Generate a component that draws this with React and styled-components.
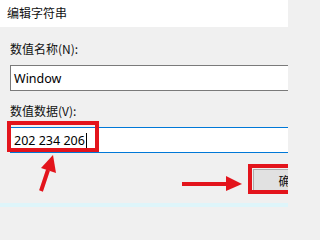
import React from "react";
import styled, { createGlobalStyle } from "styled-components";

const Global = createGlobalStyle`
  html, body { margin: 0; padding: 0; background: #f0f0f0; }
  body { width: 288px; height: 207px; overflow: hidden; }
`;

const Viewport = styled.div`
  position: relative;
  width: 288px;
  height: 207px;
  overflow: hidden;
  font-family: "Noto Sans", "Noto Sans CJK SC", sans-serif;
  color: #000;
`;

const Dialog = styled.div`
  width: 338px;
  display: flex;
  flex-direction: column;
  background: #f0f0f0;
  height: 203px;
`;

const TitleBar = styled.div`
  height: 27px;
  flex: none;
  background: #fff;
  padding-left: 7px;
  font-family: "Noto Sans CJK SC", sans-serif;
  font-size: 12px;
  line-height: 26px;
  color: #111;
`;

const Body = styled.div`
  display: flex;
  flex-direction: column;
  padding: 14px 10px 0 10px;
`;

const Label = styled.div`
  font-family: "Noto Sans CJK SC", sans-serif;
  font-size: 12px;
  line-height: 16px;
  height: 16px;
  margin-top: ${(p) => p.$top || 0}px;
  margin-bottom: 8px;
  color: #111;
`;

const TextBox = styled.div`
  box-sizing: border-box;
  height: 26px;
  border: 1px solid ${(p) => (p.$focused ? "#0078d7" : "#7a7a7a")};
  background: #fff;
  padding-left: 3px;
  display: flex;
  align-items: center;
  font-family: "Noto Sans", sans-serif;
  font-size: 12.5px;
  color: #000;
`;

const Caret = styled.span`
  display: inline-block;
  width: 1px;
  height: 15px;
  background: #000;
  margin-left: 1px;
`;

const ButtonRow = styled.div`
  display: flex;
  justify-content: flex-end;
  margin-top: 16px;
`;

const Button = styled.div`
  box-sizing: border-box;
  width: 75px;
  height: 22px;
  background: #e1e1e1;
  border: 1px solid #adadad;
  display: flex;
  align-items: center;
  justify-content: center;
  font-family: "Noto Sans CJK SC", sans-serif;
  font-size: 12px;
  color: #111;
`;

const StatusStrip = styled.div`
  height: 4px;
  background: #def5fa;
`;

const Annotations = styled.svg`
  position: absolute;
  left: 0;
  top: 0;
  pointer-events: none;
`;

export default function App() {
  const red = "#e3141c";
  return (
    <>
      <Global />
      <Viewport>
        <Dialog>
          <TitleBar>编辑字符串</TitleBar>
          <Body>
            <Label>数值名称(N):</Label>
            <TextBox>Window</TextBox>
            <Label $top={12}>数值数据(V):</Label>
            <TextBox $focused>
              202 234 206
              <Caret />
            </TextBox>
            <ButtonRow>
              <Button>确定</Button>
            </ButtonRow>
          </Body>
        </Dialog>
        <StatusStrip />
        <Annotations width="288" height="207" viewBox="0 0 288 207">
          <rect x="9" y="123" width="88" height="27" fill="none" stroke={red} strokeWidth="4" />
          <rect x="250" y="166" width="60" height="26" fill="none" stroke={red} strokeWidth="4" />
          <line x1="41" y1="191" x2="48" y2="170" stroke={red} strokeWidth="4" />
          <polygon points="53,155 41,168 56,173" fill={red} />
          <line x1="182" y1="184" x2="228" y2="184" stroke={red} strokeWidth="4" />
          <polygon points="242,184 226,176 226,191" fill={red} />
        </Annotations>
      </Viewport>
    </>
  );
}
